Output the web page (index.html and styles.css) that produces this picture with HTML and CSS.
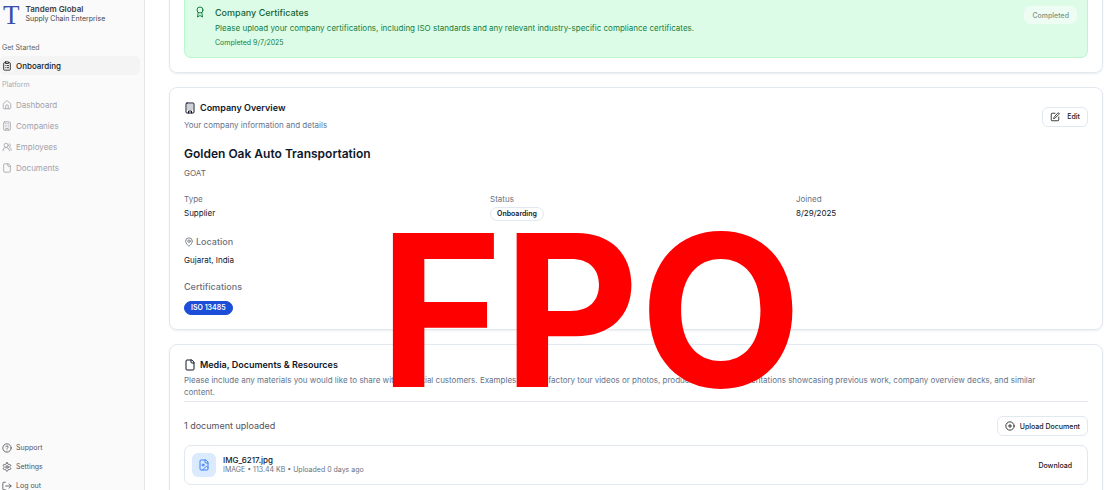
FILE: index.html
```html
<!DOCTYPE html>
<html lang="en">
  <head>
    <meta charset="UTF-8" />
    <meta name="viewport" content="width=device-width, initial-scale=1" />
    <title>Tandem Global - Onboarding</title>
    <link rel="stylesheet" href="styles.css">
  </head>
  <body>
    <div class="app">
      <aside class="sidebar">
        <div class="brand">
          <span class="brand-logo">T</span>
          <div>
            <div class="brand-name">Tandem Global</div>
            <div class="brand-sub">Supply Chain Enterprise</div>
          </div>
        </div>

        <nav class="nav">
          <div class="nav-label">Get Started</div>
          <a href="#" class="nav-item active">
            <svg class="icon" viewBox="0 0 24 24"><rect x="8" y="2" width="8" height="4" rx="1" /><path d="M16 4h2a2 2 0 0 1 2 2v14a2 2 0 0 1-2 2H6a2 2 0 0 1-2-2V6a2 2 0 0 1 2-2h2M12 11h4M12 16h4M8 11h.01M8 16h.01" /></svg>
            Onboarding
          </a>
          <div class="nav-label muted">Platform</div>
          <a href="#" class="nav-item disabled">
            <svg class="icon" viewBox="0 0 24 24"><path d="M15 21v-8a1 1 0 0 0-1-1h-4a1 1 0 0 0-1 1v8" /><path d="M3 10a2 2 0 0 1 .7-1.5l7-6a2 2 0 0 1 2.6 0l7 6A2 2 0 0 1 21 10v9a2 2 0 0 1-2 2H5a2 2 0 0 1-2-2z" /></svg>
            Dashboard
          </a>
          <a href="#" class="nav-item disabled">
            <svg class="icon" viewBox="0 0 24 24"><rect x="4" y="2" width="16" height="20" rx="2" /><path d="M9 22v-4h6v4M8 6h.01M16 6h.01M12 6h.01M12 10h.01M12 14h.01M16 10h.01M16 14h.01M8 10h.01M8 14h.01" /></svg>
            Companies
          </a>
          <a href="#" class="nav-item disabled">
            <svg class="icon" viewBox="0 0 24 24"><path d="M18 21a8 8 0 0 0-16 0" /><circle cx="10" cy="8" r="5" /><path d="M22 20c0-3.370-2-6.500-4-8a5 5 0 0 0-.450-8.300" /></svg>
            Employees
          </a>
          <a href="#" class="nav-item disabled">
            <svg class="icon" viewBox="0 0 24 24"><path d="M15 2H6a2 2 0 0 0-2 2v16a2 2 0 0 0 2 2h12a2 2 0 0 0 2-2V7z" /><path d="M14 2v4a2 2 0 0 0 2 2h4" /></svg>
            Documents
          </a>
        </nav>

        <nav class="nav-footer">
          <a href="#" class="nav-item">
            <svg class="icon" viewBox="0 0 24 24"><circle cx="12" cy="12" r="10" /><path d="M9.090 9a3 3 0 0 1 5.830 1c0 2-3 3-3 3M12 17h.01" /></svg>
            Support
          </a>
          <a href="#" class="nav-item">
            <svg class="icon" viewBox="0 0 24 24"><path d="M12.220 2h-.440a2 2 0 0 0-2 2v.180a2 2 0 0 1-1 1.730l-.430.250a2 2 0 0 1-2 0l-.150-.080a2 2 0 0 0-2.730.730l-.220.380a2 2 0 0 0 .730 2.730l.150.100a2 2 0 0 1 1 1.720v.510a2 2 0 0 1-1 1.740l-.150.090a2 2 0 0 0-.730 2.730l.220.380a2 2 0 0 0 2.730.730l.150-.080a2 2 0 0 1 2 0l.430.250a2 2 0 0 1 1 1.730V20a2 2 0 0 0 2 2h.440a2 2 0 0 0 2-2v-.180a2 2 0 0 1 1-1.730l.430-.250a2 2 0 0 1 2 0l.150.080a2 2 0 0 0 2.730-.730l.220-.390a2 2 0 0 0-.730-2.730l-.150-.080a2 2 0 0 1-1-1.740v-.500a2 2 0 0 1 1-1.740l.150-.090a2 2 0 0 0 .730-2.730l-.220-.380a2 2 0 0 0-2.730-.730l-.150.080a2 2 0 0 1-2 0l-.430-.250a2 2 0 0 1-1-1.730V4a2 2 0 0 0-2-2z" /><circle cx="12" cy="12" r="3" /></svg>
            Settings
          </a>
          <a href="#" class="nav-item">
            <svg class="icon" viewBox="0 0 24 24"><path d="M8 3H4a2 2 0 0 0-2 2v14a2 2 0 0 0 2 2h4M17 17l5-5-5-5M22 12H9" /></svg>
            Log out
          </a>
        </nav>
      </aside>

      <main class="content">
        <section class="card card-first">
          <div class="task">
            <svg class="icon task-icon" viewBox="0 0 24 24"><path d="M15.480 12.890 17 22l-5-3-5 3 1.520-9.110" /><circle cx="12" cy="8" r="6" /></svg>
            <div class="task-body">
              <h3>Company Certificates</h3>
              <p>Please upload your company certifications, including ISO standards and any relevant industry-specific compliance certificates.</p>
              <small>Completed 9/7/2025</small>
            </div>
            <button class="btn btn-done" disabled>Completed</button>
          </div>
        </section>

        <section class="card">
          <header class="card-header">
            <div>
              <h3 class="card-title">
                <svg class="icon" viewBox="0 0 24 24"><rect x="4" y="2" width="16" height="20" rx="2" /><path d="M9 22v-4h6v4M8 6h.01M16 6h.01M12 6h.01M12 10h.01M12 14h.01M16 10h.01M16 14h.01M8 10h.01M8 14h.01" /></svg>
                Company Overview
              </h3>
              <p class="card-desc">Your company information and details</p>
            </div>
            <button class="btn btn-edit">
              <svg class="icon" viewBox="0 0 24 24"><path d="M12 3H5a2 2 0 0 0-2 2v14a2 2 0 0 0 2 2h14a2 2 0 0 0 2-2v-7" /><path d="M18.400 2.600a2.100 2.100 0 0 1 3 3l-9 9a2 2 0 0 1-.9.5l-2.900.9.900-2.900a2 2 0 0 1 .5-.9z" /></svg>
              Edit
            </button>
          </header>

          <h2 class="company-name">Golden Oak Auto Transportation</h2>
          <p class="company-short">GOAT</p>

          <dl class="facts">
            <div>
              <dt>Type</dt>
              <dd>Supplier</dd>
            </div>
            <div>
              <dt>Status</dt>
              <dd><span class="badge">Onboarding</span></dd>
            </div>
            <div>
              <dt>Joined</dt>
              <dd>8/29/2025</dd>
            </div>
          </dl>

          <h4 class="sub-title">
            <svg class="icon" viewBox="0 0 24 24"><path d="M20 10c0 5-5.500 10.200-7.400 11.800a1 1 0 0 1-1.200 0C9.500 20.200 4 15 4 10a8 8 0 0 1 16 0" /><circle cx="12" cy="10" r="3" /></svg>
            Location
          </h4>
          <p class="location">Gujarat, India</p>

          <h4 class="sub-title">Certifications</h4>
          <div class="badges">
            <span class="badge badge-blue">ISO 13485</span>
          </div>
        </section>

        <section class="card">
          <header class="media-header">
            <h3 class="card-title">
              <svg class="icon" viewBox="0 0 24 24"><path d="M15 2H6a2 2 0 0 0-2 2v16a2 2 0 0 0 2 2h12a2 2 0 0 0 2-2V7z" /><path d="M14 2v4a2 2 0 0 0 2 2h4" /></svg>
              Media, Documents &amp; Resources
            </h3>
            <p class="media-desc">Please include any materials you would like to share with potential customers. Examples include factory tour videos or photos, product demos, or presentations showcasing previous work, company overview decks, and similar content.</p>
          </header>

          <div class="upload-row">
            <span>1 document uploaded</span>
            <button class="btn">
              <svg class="icon" viewBox="0 0 24 24"><circle cx="12" cy="12" r="10" /><path d="M8 12h8M12 8v8" /></svg>
              Upload Document
            </button>
          </div>

          <div class="file">
            <span class="file-icon">
              <svg class="icon" viewBox="0 0 24 24"><path d="M15 2H6a2 2 0 0 0-2 2v16a2 2 0 0 0 2 2h12a2 2 0 0 0 2-2V7z" /><path d="M14 2v4a2 2 0 0 0 2 2h4" /><circle cx="10" cy="12" r="2" /><path d="m20 17-1.300-1.300a2.410 2.410 0 0 0-3.400 0L9 22" /></svg>
            </span>
            <div class="file-info">
              <div class="file-name">IMG_6217.jpg</div>
              <div class="file-meta">IMAGE • 113.44 KB • Uploaded 0 days ago</div>
            </div>
            <button class="btn btn-ghost">Download</button>
          </div>
        </section>
      </main>

      <div class="watermark">FPO</div>
    </div>
  </body>
</html>
```
FILE: styles.css
```css
* {
  box-sizing: border-box;
}
body {
  margin: 0;
  font-family: Inter, sans-serif;
  font-size: 8px;
  line-height: 12px;
  color: #0f172a;
  background: #fff;
}
h2,
h3,
h4,
p,
dl,
dd {
  margin: 0;
}
.app {
  position: relative;
  display: flex;
  height: 100vh;
  overflow: hidden;
}
.icon {
  width: 10px;
  height: 10px;
  flex: none;
  fill: none;
  stroke: currentColor;
  stroke-width: 2;
  stroke-linecap: round;
  stroke-linejoin: round;
}

/* Sidebar */
.sidebar {
  display: flex;
  flex-direction: column;
  flex: none;
  width: 145px;
  padding-right: 4px;
  background: #fafafa;
  border-right: 1px solid #e5e7eb;
}
.brand {
  display: flex;
  align-items: center;
  gap: 6px;
  padding: 3px 0 0 3px;
  line-height: 10px;
  color: #3f3f46;
}
.brand-logo {
  padding-top: 2px;
  font-family: "Liberation Serif", serif;
  font-size: 27px;
  line-height: 20px;
  color: #3a50a8;
}
.brand-name {
  font-weight: 600;
}
.brand-sub {
  font-size: 7px;
}
.nav {
  padding-top: 15px;
}
.nav-label {
  padding: 2px;
  font-size: 7px;
  line-height: 12px;
  color: #5f5f66;
}
.nav-label.muted {
  padding-bottom: 4px;
  color: #a3adba;
}
.nav-item {
  display: flex;
  align-items: center;
  gap: 4px;
  height: 19px;
  padding-left: 2px;
  border-radius: 5px;
  color: #52525b;
  text-decoration: none;
}
.nav-item.active {
  margin-bottom: 2px;
  background: #f4f4f5;
  color: #18181b;
  font-weight: 500;
}
.nav-item.disabled {
  margin-bottom: 2px;
  color: #a1a1aa;
}
.nav-footer {
  margin-top: auto;
  margin-bottom: -5px;
  font-size: 7px;
}

/* Cards */
.content {
  flex: 1;
  min-width: 0;
  padding: 0 10px 0 24px;
}
.card {
  margin-bottom: 14px;
  padding: 14px;
  border: 1px solid #e2e8f0;
  border-radius: 8px;
  box-shadow: 0 1px 2px rgba(15, 23, 42, 0.08);
}
.card-first {
  padding-top: 0;
  border-top: 0;
  border-radius: 0 0 8px 8px;
}
.btn {
  display: flex;
  align-items: center;
  gap: 5px;
  height: 20px;
  padding: 0 7px;
  border: 1px solid #e2e8f0;
  border-radius: 6px;
  background: #fff;
  color: #18181b;
  font-family: inherit;
  font-size: 7px;
  font-weight: 500;
}

/* Completed task */
.task {
  display: flex;
  align-items: flex-start;
  padding: 6px 10px 8px 9px;
  border: 1px solid #b9f8cf;
  border-top: 0;
  border-radius: 0 0 7px 7px;
  background: #dcfce7;
  color: #15803d;
}
.task-icon {
  width: 12px;
  height: 12px;
  margin-right: 9px;
}
.task-body {
  flex: 1;
}
.task-body h3 {
  font-size: 9px;
  font-weight: 500;
  line-height: 14px;
  color: #166534;
}
.task-body p {
  margin: 2px 0 3px;
}
.task-body small {
  display: block;
  font-size: 7px;
}
.btn-done {
  height: 18px;
  border-color: #eefdf3;
  background: #eefdf3;
  color: #7b9585;
}

/* Company overview */
.card-header {
  display: flex;
  align-items: center;
  justify-content: space-between;
}
.card-title {
  display: flex;
  align-items: center;
  gap: 4px;
  font-size: 9px;
  font-weight: 600;
  line-height: 12px;
}
.card-title .icon {
  width: 12px;
  height: 12px;
}
.card-desc {
  margin-top: 5px;
  color: #64748b;
}
.btn-edit {
  gap: 7px;
}
.company-name {
  margin-top: 15px;
  font-size: 12px;
  font-weight: 600;
  line-height: 16px;
}
.company-short {
  margin-top: 5px;
  color: #64646d;
}
.facts {
  display: grid;
  grid-template-columns: repeat(3, 1fr);
  gap: 14px;
  margin-top: 14px;
}
.facts dt {
  color: #6b7280;
}
.facts dd {
  display: flex;
  margin-top: 2px;
}
.badge {
  padding: 0 6px;
  border: 1px solid #e2e8f0;
  border-radius: 7px;
  font-size: 7px;
  font-weight: 600;
  line-height: 12px;
}
.badges {
  display: flex;
  margin-top: 7px;
}
.badge-blue {
  border-color: #1d4ed8;
  background: #1d4ed8;
  color: #fff;
}
.sub-title {
  display: flex;
  align-items: center;
  gap: 2px;
  margin-top: 14px;
  font-size: 9px;
  font-weight: 500;
  line-height: 14px;
  color: #6b7280;
}
.location {
  margin-top: 5px;
}

/* Media */
.media-header {
  padding-bottom: 3px;
  border-bottom: 1px solid #e5e9ef;
}
.media-desc {
  margin-top: 3px;
  padding-right: 32px;
  color: #64748b;
}
.upload-row {
  display: flex;
  align-items: center;
  justify-content: space-between;
  margin-top: 14px;
  font-size: 9px;
  color: #52525b;
}
.file {
  display: flex;
  align-items: center;
  gap: 7px;
  margin-top: 9px;
  padding: 7px;
  border: 1px solid #e2e8f0;
  border-radius: 7px;
}
.file-icon {
  display: flex;
  align-items: center;
  justify-content: center;
  width: 24px;
  height: 24px;
  border-radius: 6px;
  background: #dbeafe;
  color: #3b82f6;
}
.file-icon .icon {
  width: 12px;
  height: 12px;
}
.file-info {
  flex: 1;
  line-height: 10px;
}
.file-name {
  font-weight: 500;
}
.file-meta {
  font-size: 7px;
  color: #6b7280;
}
.btn-ghost {
  border-color: transparent;
  background: transparent;
}

/* Placeholder mark over the page */
.watermark {
  position: absolute;
  top: 205px;
  left: 379px;
  font-size: 211px;
  font-weight: 700;
  line-height: 211px;
  color: #f00;
  pointer-events: none;
}
```
